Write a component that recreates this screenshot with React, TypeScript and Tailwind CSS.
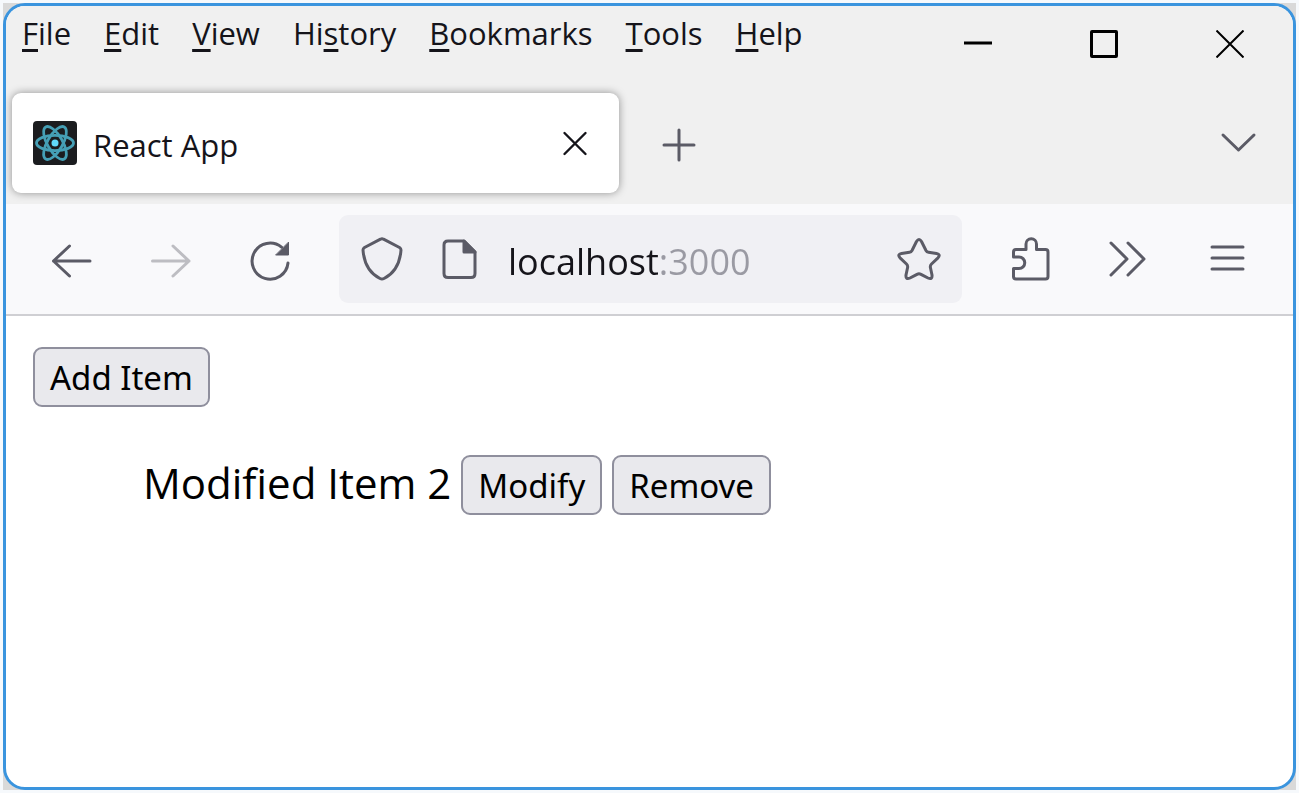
import type { ReactNode } from "react";

const menus = [
  { before: "", key: "F", after: "ile" },
  { before: "", key: "E", after: "dit" },
  { before: "", key: "V", after: "iew" },
  { before: "Hi", key: "s", after: "tory" },
  { before: "", key: "B", after: "ookmarks" },
  { before: "", key: "T", after: "ools" },
  { before: "", key: "H", after: "elp" },
];

const items = ["Modified Item 2"];

function Icon({ children }: { children: ReactNode }) {
  return (
    <svg
      viewBox="0 0 44 44"
      className="w-11 h-11 shrink-0"
      fill="none"
      stroke="currentColor"
      strokeWidth="3"
      strokeLinecap="round"
      strokeLinejoin="round"
      aria-hidden="true"
    >
      {children}
    </svg>
  );
}

function IconButton({
  label,
  disabled,
  children,
}: {
  label: string;
  disabled?: boolean;
  children: ReactNode;
}) {
  return (
    <button
      type="button"
      aria-label={label}
      disabled={disabled}
      className="shrink-0 text-[#5b5b66] disabled:text-[#bdbdc2]"
    >
      <Icon>{children}</Icon>
    </button>
  );
}

function PageButton({ children }: { children: ReactNode }) {
  return (
    <button
      type="button"
      className="h-[60px] px-[15px] pt-[2px] rounded-[9px] border-2 border-[#8f8f9d] bg-[#e9e9ed] font-['Noto_Sans',sans-serif] text-[33px] leading-[40px] text-black"
    >
      {children}
    </button>
  );
}

function ReactLogo() {
  return (
    <svg viewBox="0 0 44 44" className="w-11 h-11 shrink-0" aria-hidden="true">
      <rect width="44" height="44" rx="4" fill="#1b1c1f" />
      <g fill="none" stroke="#459fb5" strokeWidth="2.8">
        <ellipse cx="22" cy="22" rx="18.5" ry="7.6" />
        <ellipse cx="22" cy="22" rx="18.5" ry="7.6" transform="rotate(60 22 22)" />
        <ellipse cx="22" cy="22" rx="18.5" ry="7.6" transform="rotate(120 22 22)" />
      </g>
      <circle cx="22" cy="22" r="3.5" fill="#61dafb" />
    </svg>
  );
}

function TitleBar() {
  return (
    <div className="flex justify-between h-[87px] pl-4 pr-[49px]">
      <nav className="flex gap-[33px] pt-[6px] text-[31px] leading-[42px] text-[#15141a]">
        {menus.map((m) => (
          <button key={m.key} type="button" className="h-[42px]">
            {m.before}
            <span className="underline decoration-[3px] underline-offset-[4px]">
              {m.key}
            </span>
            {m.after}
          </button>
        ))}
      </nav>
      <div className="flex gap-[98px] pt-6 text-black">
        <button type="button" aria-label="Minimize" className="h-7">
          <svg viewBox="0 0 28 28" className="w-7 h-7" stroke="currentColor" strokeWidth="3">
            <path d="M0 13H28" />
          </svg>
        </button>
        <button type="button" aria-label="Maximize" className="h-7">
          <svg viewBox="0 0 28 28" className="w-7 h-7" fill="none" stroke="currentColor" strokeWidth="3">
            <rect x="1.5" y="1.5" width="25" height="25" rx="0.5" />
          </svg>
        </button>
        <button type="button" aria-label="Close" className="h-7">
          <svg viewBox="0 0 28 28" className="w-7 h-7" stroke="currentColor" strokeWidth="2">
            <path d="M0.5 0.5L27.5 27.5M27.5 0.5L0.5 27.5" />
          </svg>
        </button>
      </div>
    </div>
  );
}

function TabBar() {
  return (
    <div className="flex items-center h-[111px] pl-[6px] pr-[33px] pb-[11px]">
      <div className="flex items-center w-[607px] h-[100px] pl-[21px] pr-[22px] rounded-[9px] bg-white shadow-[0_0_8px_rgba(0,0,0,0.4)]">
        <ReactLogo />
        <span className="flex-1 pl-4 pt-1 text-[31px] leading-[42px] text-[#15141a]">
          React App
        </span>
        <button type="button" aria-label="Close tab" className="text-[#15141a]">
          <Icon>
            <path d="M11.5 12L32.5 33M32.5 12L11.5 33" strokeWidth="2.4" />
          </Icon>
        </button>
      </div>
      <div className="flex flex-1 justify-between pl-[38px]">
        <IconButton label="New tab">
          <path d="M22 9V39M7 24H37" />
        </IconButton>
        <IconButton label="List all tabs">
          <path d="M7 14L22.5 29L38 14" />
        </IconButton>
      </div>
    </div>
  );
}

function Toolbar() {
  return (
    <div className="flex items-center gap-[47px] h-[112px] pl-[42px] pr-11 border-b-2 border-[#cfcfd3] bg-[#f9f9fb]">
      <div className="flex gap-14">
        <IconButton label="Back">
          <path d="M42 24H5.5M21.5 9L5.5 24L21.5 39" />
        </IconButton>
        <IconButton label="Forward" disabled>
          <path d="M4.5 24H41M25 9L41 24L25 39" />
        </IconButton>
        <IconButton label="Reload">
          <path d="M40 26A18 18 0 1 1 33.5 10.2" />
          <path d="M40.5 5.5V18H28Z" fill="currentColor" strokeWidth="1" />
        </IconButton>
      </div>
      <div className="flex flex-1 items-center min-w-0 h-[88px] px-[21px] rounded-[9px] bg-[#f0f0f4] text-[#5b5b66]">
        <Icon>
          <path d="M20.5 2.2Q22 1.3 23.5 2.2L39.5 10.5Q41 11.5 41 13C40 26 35 36 24 41.5Q22 42.5 20 41.5C9 36 4 26 3 13Q3 11.5 4.5 10.5Z" />
        </Icon>
        <div className="pl-[34px]">
          <Icon>
            <path d="M10 4H26L37 15V36.5Q37 40.5 33 40.5H10Q6 40.5 6 36.5V8Q6 4 10 4Z" />
            <path d="M26 4V15H37Z" fill="currentColor" />
          </Icon>
        </div>
        <input
          type="text"
          aria-label="Address"
          defaultValue="localhost:3000"
          className="flex-1 min-w-0 ml-[26px] pt-[6px] text-[36px] leading-[50px] outline-none bg-clip-text text-transparent bg-linear-to-r from-[#15141a] from-[151px] to-[#9a9aa3] to-[151px]"
        />
        <IconButton label="Bookmark this page">
          <path d="M19.5 4.5Q22 0.5 24.5 4.5L29 13.5Q29.8 15 31.5 15.2L39.5 16.5Q44 17.5 41 20.8L34.5 27Q33 28.5 33.4 30.5L35 38Q35.5 43 31 41L24 37.3Q22 36.3 20 37.3L13 41Q8.5 43 9 38L10.6 30.5Q11 28.5 9.5 27L3 20.8Q0 17.5 4.5 16.5L12.5 15.2Q14.2 15 15 13.5Z" />
        </IconButton>
      </div>
      <div className="flex gap-[54px]">
        <IconButton label="Extensions">
          <path d="M4.5 20V15Q4.5 12.5 7 12.5H17V7A5.2 5.2 0 0 1 27.5 7V12.5H36.5Q39 12.5 39 15V39.5Q39 42 36.5 42H7Q4.5 42 4.5 39.5V31.5H10A5.7 5.7 0 0 0 10 20Z" />
        </IconButton>
        <IconButton label="More tools">
          <path d="M4 6L20 22L4 38M21 6L37 22L21 38" />
        </IconButton>
        <IconButton label="Open application menu">
          <path d="M7 10H38M7 21H38M7 32H38" />
        </IconButton>
      </div>
    </div>
  );
}

export default function App() {
  return (
    <div className="flex min-h-screen p-[3px] bg-[#f6f9fc] font-['Open_Sans',sans-serif]">
      <div className="flex flex-1 min-w-0 bg-[#d9d9d9]">
        <div className="flex flex-col flex-1 min-w-0 overflow-hidden rounded-[22px] border-[3px] border-[#3a94de] bg-white">
          <header className="bg-[#f0f0f0]">
            <TitleBar />
            <TabBar />
            <Toolbar />
          </header>
          <main className="px-[27px] pt-[31px]">
            <PageButton>Add Item</PageButton>
            <ul className="pt-12 pl-[110px]">
              {items.map((item) => (
                <li key={item} className="flex items-start gap-[10px]">
                  <span className="text-[42px] leading-[56px] text-black">{item}</span>
                  <PageButton>Modify</PageButton>
                  <PageButton>Remove</PageButton>
                </li>
              ))}
            </ul>
          </main>
        </div>
      </div>
    </div>
  );
}
